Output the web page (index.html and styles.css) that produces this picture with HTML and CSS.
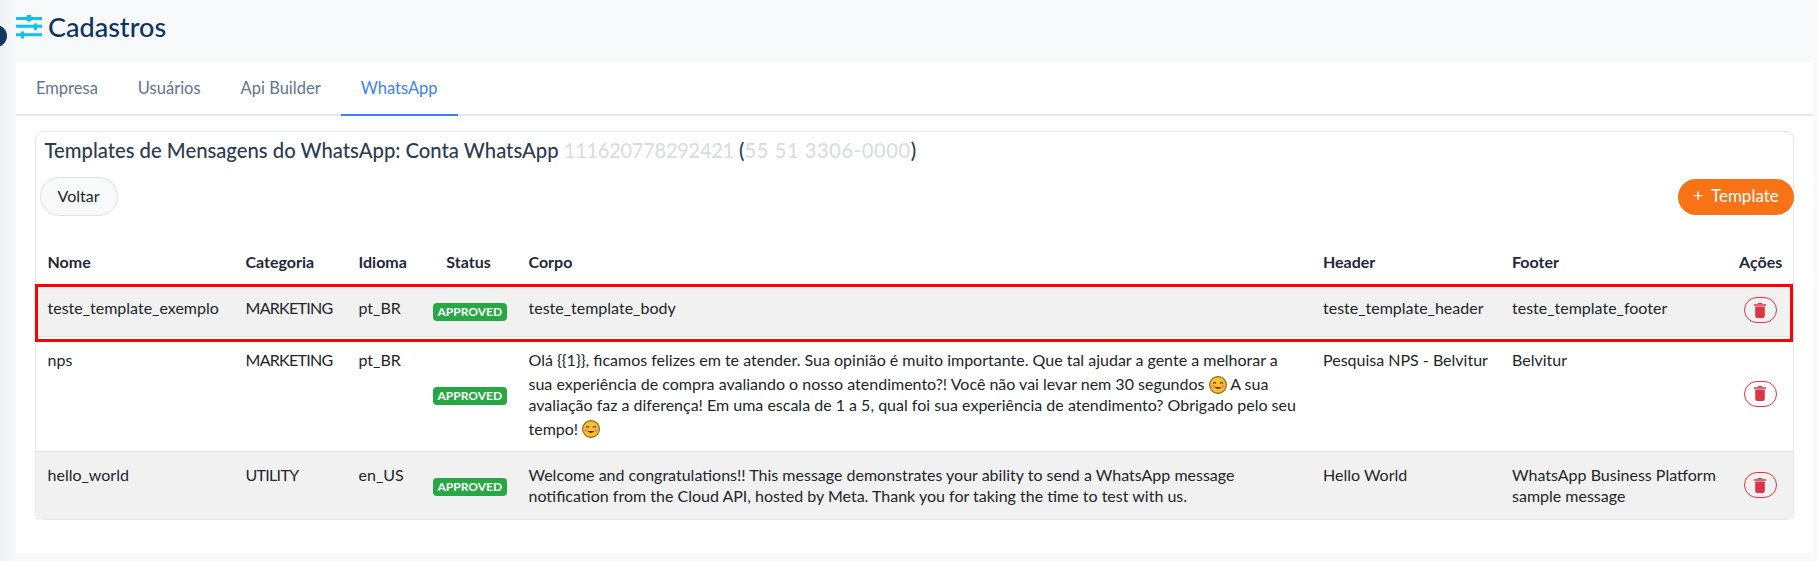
FILE: index.html
```html
<!DOCTYPE html>
<html lang="pt-BR">
<head>
    <meta charset="UTF-8">
    <title>Cadastros</title>
    <link rel="stylesheet" href="styles.css">
</head>
<body>
    <span class="sidebar-toggle"></span>
    <div class="page-title">
        <svg class="title-icon" viewBox="0 0 26 24" width="26" height="24">
            <path d="M0 2h26v3H0zM0 9.700h26v3H0zM0 18.300h26v3H0z" fill="#0fc0f0"/>
            <path d="M11 0h4v6.500h-4zM18 8.500h3v6.700h-3zM5 16.500h3v7H5z" fill="#0fc0f0"/>
        </svg>
        <h1>Cadastros</h1>
    </div>

    <div class="panel">
        <div class="tabs">
            <a class="tab">Empresa</a>
            <a class="tab">Usuários</a>
            <a class="tab">Api Builder</a>
            <a class="tab active">WhatsApp</a>
        </div>

        <div class="card">
            <h2 class="card-title">Templates de Mensagens do WhatsApp: Conta WhatsApp <span class="masked masked-id">111620778292421</span> <span class="masked-paren">(</span><span class="masked masked-phone">55 51 3306-0000</span><span class="masked-paren">)</span></h2>
            <div class="toolbar">
                <button class="btn-back">Voltar</button>
                <button class="btn-add"><span>+</span> Template</button>
            </div>

            <div class="table-wrap">
                <table class="templates">
                    <thead>
                        <tr>
                            <th class="col-name">Nome</th>
                            <th class="col-cat">Categoria</th>
                            <th class="col-lang">Idioma</th>
                            <th class="col-status">Status</th>
                            <th class="col-body">Corpo</th>
                            <th class="col-header">Header</th>
                            <th class="col-footer">Footer</th>
                            <th class="col-actions">Ações</th>
                        </tr>
                    </thead>
                    <tbody>
                        <tr class="striped">
                            <td>teste_template_exemplo</td>
                            <td class="cell-cat">MARKETING</td>
                            <td>pt_BR</td>
                            <td class="cell-status"><span class="badge">APPROVED</span></td>
                            <td>teste_template_body</td>
                            <td>teste_template_header</td>
                            <td class="cell-footer">teste_template_footer</td>
                            <td class="cell-actions"><button class="btn-delete"><svg viewBox="0 0 12 15" width="12" height="15"><path d="M4 0h4v1H4zM0 1.200h12v1.600H0zM1.200 3.600h9.600V13a2 2 0 0 1-2 2H3.200a2 2 0 0 1-2-2z"/></svg></button></td>
                        </tr>
                        <tr>
                            <td>nps</td>
                            <td class="cell-cat">MARKETING</td>
                            <td>pt_BR</td>
                            <td class="cell-status"><span class="badge">APPROVED</span></td>
                            <td>Olá {{1}}, ficamos felizes em te atender. Sua opinião é muito importante. Que tal ajudar a gente a melhorar a sua experiência de compra avaliando o nosso atendimento?! Você não vai levar nem 30 segundos <svg class="emoji" viewBox="0 0 18 18" width="18" height="18"><circle cx="9" cy="9" r="8.400" fill="#fbbf2d" stroke="#8a6414" stroke-width="1.100"/><circle cx="4" cy="10.500" r="1.800" fill="#f58a6a"/><circle cx="14" cy="10.500" r="1.800" fill="#f58a6a"/><path d="M4 7.500q1.500-2 3 0M11 7.500q1.500-2 3 0" fill="none" stroke="#4a3208" stroke-width="1.200"/><path d="M5.500 11q3.500 4 7 0z" fill="#6b2f0c"/></svg> A sua avaliação faz a diferença! Em uma escala de 1 a 5, qual foi sua experiência de atendimento? Obrigado pelo seu tempo! <svg class="emoji" viewBox="0 0 18 18" width="18" height="18"><circle cx="9" cy="9" r="8.400" fill="#fbbf2d" stroke="#8a6414" stroke-width="1.100"/><circle cx="4" cy="10.500" r="1.800" fill="#f58a6a"/><circle cx="14" cy="10.500" r="1.800" fill="#f58a6a"/><path d="M4 7.500q1.500-2 3 0M11 7.500q1.500-2 3 0" fill="none" stroke="#4a3208" stroke-width="1.200"/><path d="M5.500 11q3.500 4 7 0z" fill="#6b2f0c"/></svg></td>
                            <td>Pesquisa NPS - Belvitur</td>
                            <td class="cell-footer">Belvitur</td>
                            <td class="cell-actions"><button class="btn-delete"><svg viewBox="0 0 12 15" width="12" height="15"><path d="M4 0h4v1H4zM0 1.200h12v1.600H0zM1.200 3.600h9.600V13a2 2 0 0 1-2 2H3.200a2 2 0 0 1-2-2z"/></svg></button></td>
                        </tr>
                        <tr class="striped">
                            <td>hello_world</td>
                            <td class="cell-cat">UTILITY</td>
                            <td>en_US</td>
                            <td class="cell-status"><span class="badge">APPROVED</span></td>
                            <td>Welcome and congratulations!! This message demonstrates your ability to send a WhatsApp message notification from the Cloud API, hosted by Meta. Thank you for taking the time to test with us.</td>
                            <td>Hello World</td>
                            <td class="cell-footer">WhatsApp Business Platform sample message</td>
                            <td class="cell-actions"><button class="btn-delete"><svg viewBox="0 0 12 15" width="12" height="15"><path d="M4 0h4v1H4zM0 1.200h12v1.600H0zM1.200 3.600h9.600V13a2 2 0 0 1-2 2H3.200a2 2 0 0 1-2-2z"/></svg></button></td>
                        </tr>
                    </tbody>
                </table>
                <!-- marcação vermelha em volta da primeira linha -->
                <div class="row-mark"></div>
            </div>
        </div>
    </div>
</body>
</html>
```

FILE: styles.css
```css
* {
    margin: 0;
    padding: 0;
    box-sizing: border-box;
}

html, body {
    height: 561px;
    overflow: hidden;
}

body {
    font-family: 'Lato', 'Noto Sans', sans-serif;
    font-size: 16px;
    line-height: 21px;
    color: #212529;
    background: linear-gradient(90deg, #eef0f3 0, #f8f9fb 16px);
    padding-left: 16px;
}

.sidebar-toggle {
    position: absolute;
    left: -15px;
    top: 25px;
    width: 22px;
    height: 22px;
    border-radius: 50%;
    background: #12385f;
}

.page-title {
    display: flex;
    align-items: center;
    gap: 6px;
    height: 62px;
    padding-bottom: 8px;
}

.page-title h1 {
    font-size: 27px;
    font-weight: 500;
    line-height: 32px;
    color: #0b3560;
}

.panel {
    margin-right: 4px;
    height: 491px;
    background: #fff;
}

.tabs {
    display: flex;
    height: 54px;
    border-bottom: 2px solid #e5e8ef;
}

.tab {
    display: flex;
    align-items: center;
    padding: 0 20px;
    margin-bottom: -2px;
    font-size: 16.500px;
    color: #64748b;
    border-bottom: 2px solid transparent;
}

.tab.active {
    color: #3b82f6;
    border-bottom-color: #3b82f6;
}

.card {
    margin: 15px 19px 0 18.500px;
    border: 1px solid #e5e7eb;
    border-radius: 8px;
}

.card-title {
    font-size: 20.250px;
    font-weight: 500;
    line-height: 24px;
    color: #2d3b4e;
    padding: 6px 9px 0;
}

.masked {
    color: #d9dde2;
    filter: blur(0.5px);
}

.masked-id {
    letter-spacing: -0.400px;
}

.masked-phone {
    letter-spacing: 0.500px;
}

.masked-paren {
    color: #2d3b4e;
}

.toolbar {
    display: flex;
    justify-content: space-between;
    align-items: center;
    margin: 15px -1px 0 4px;
}

.btn-back {
    font: inherit;
    width: 78px;
    height: 39px;
    padding-bottom: 2px;
    color: #212529;
    background: #f8f9fb;
    border: 1px solid #e0e2e6;
    border-radius: 20px;
}

.btn-add {
    font: inherit;
    font-size: 17px;
    width: 116px;
    height: 36px;
    padding-bottom: 3px;
    color: #fff;
    background: #f97316;
    border: none;
    border-radius: 18px;
}

.btn-add span {
    margin-right: 4px;
}

.table-wrap {
    position: relative;
    margin-top: 23px;
}

.templates {
    width: 100%;
    table-layout: fixed;
    border-collapse: collapse;
}

.templates th, .templates td {
    text-align: left;
    vertical-align: top;
    padding: 12.500px 12px;
    font-weight: 400;
}

.templates th {
    font-weight: 700;
    padding-top: 11.500px;
    padding-bottom: 13px;
    color: #1f2937;
}

.col-name { width: 198px; }
.col-cat { width: 113px; }
.col-lang { width: 74px; }
.col-status { width: 96px; }
.col-header { width: 189px; }
.col-footer { width: 227px; }
.col-actions { width: 66px; }

.templates td.cell-cat {
    letter-spacing: -0.700px;
}

.templates td.cell-footer {
    padding-right: 0;
}

.templates th.col-status, .templates td.cell-status {
    text-align: center;
}

.templates td.cell-status, .templates td.cell-actions {
    vertical-align: middle;
}

.templates th.col-actions {
    padding-left: 12px;
    padding-right: 0;
}

.templates td.cell-actions {
    padding-left: 8px;
    padding-right: 8px;
}

.templates tbody tr {
    border-bottom: 1px solid #e2e4e8;
}

.templates tbody tr:last-child {
    border-bottom: none;
}

.striped {
    background: #f1f1f2;
}

.row-mark {
    position: absolute;
    left: -1px;
    right: 0;
    top: 45px;
    height: 58px;
    border: 3px solid #ff0000;
    pointer-events: none;
}

.badge {
    display: inline-block;
    margin: 2px 3px 0 0;
    padding: 0 5px;
    font-size: 12px;
    font-weight: 700;
    line-height: 18px;
    color: #fff;
    background: #28a745;
    border-radius: 4px;
}

.btn-delete {
    display: flex;
    align-items: center;
    justify-content: center;
    width: 33px;
    height: 26px;
    margin: 0 auto;
    background: transparent;
    border: 1px solid #dc3545;
    border-radius: 13px;
}

.btn-delete svg {
    fill: #dc3545;
}

.emoji {
    margin-top: 5.500px;
    vertical-align: -4px;
}
```
